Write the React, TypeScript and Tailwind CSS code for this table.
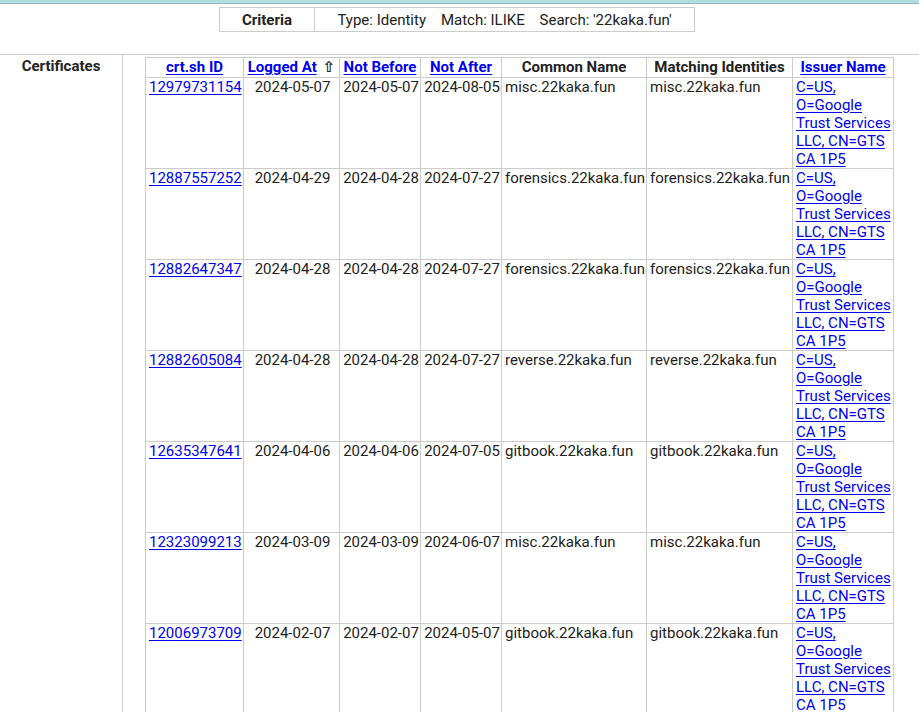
import React from 'react';

type Cert = { id: string; logged: string; notBefore: string; notAfter: string; name: string };

const certs: Cert[] = [
  { id: '12979731154', logged: '2024-05-07', notBefore: '2024-05-07', notAfter: '2024-08-05', name: 'misc.22kaka.fun' },
  { id: '12887557252', logged: '2024-04-29', notBefore: '2024-04-28', notAfter: '2024-07-27', name: 'forensics.22kaka.fun' },
  { id: '12882647347', logged: '2024-04-28', notBefore: '2024-04-28', notAfter: '2024-07-27', name: 'forensics.22kaka.fun' },
  { id: '12882605084', logged: '2024-04-28', notBefore: '2024-04-28', notAfter: '2024-07-27', name: 'reverse.22kaka.fun' },
  { id: '12635347641', logged: '2024-04-06', notBefore: '2024-04-06', notAfter: '2024-07-05', name: 'gitbook.22kaka.fun' },
  { id: '12323099213', logged: '2024-03-09', notBefore: '2024-03-09', notAfter: '2024-06-07', name: 'misc.22kaka.fun' },
  { id: '12006973709', logged: '2024-02-07', notBefore: '2024-02-07', notAfter: '2024-05-07', name: 'gitbook.22kaka.fun' },
];

const issuer = 'C=US, O=Google Trust Services LLC, CN=GTS CA 1P5';

const link = 'text-[#0000ee] underline underline-offset-2';
const th = 'border border-[#cccccc] px-[2px] pb-[1px] text-center font-bold align-middle whitespace-nowrap';
const td = 'border border-[#cccccc] pl-[3px] pr-px align-top';

export default function App() {
  return (
    <div className="min-h-[712px] bg-white text-[15px] leading-[18px] text-[#222]" style={{ fontFamily: 'Roboto, "Liberation Sans", sans-serif' }}>
      <div className="h-[3px] bg-[#b2dde3]" />
      <div className="h-px bg-[#9ab7bb]" />

      <div className="mt-[3px] pl-[219px]">
        <table className="border-collapse">
          <tbody>
            <tr>
              <th className="w-[95px] border border-[#cccccc] pt-[3px] pb-[2px] text-center font-bold">Criteria</th>
              <td className="w-[380px] border border-[#cccccc] pt-[3px] pb-[2px] text-center whitespace-nowrap">
                Type: Identity&nbsp;&nbsp;&nbsp; Match: ILIKE&nbsp;&nbsp;&nbsp; Search: '22kaka.fun'
              </td>
            </tr>
          </tbody>
        </table>
      </div>

      <div className="mt-[22px] flex border-t border-[#cccccc]">
        <div className="w-[123px] shrink-0 border-r border-[#cccccc] pt-[2px] text-center font-bold min-h-[660px]">
          Certificates
        </div>
        <div className="pl-[22px] pt-[2px]">
          <table className="w-[749px] table-fixed border-collapse">
            <thead>
              <tr>
                <th className={`${th} w-[98px]`}><a className={link}>crt.sh ID</a></th>
                <th className={`${th} w-[96px]`}>
                  <a className={link}>Logged At</a>
                  <span className="ml-[6px] text-[15px] leading-none font-bold" style={{ fontFamily: '"DejaVu Sans", sans-serif' }}>⇧</span>
                </th>
                <th className={`${th} w-[81px]`}><a className={link}>Not Before</a></th>
                <th className={`${th} w-[81px]`}><a className={link}>Not After</a></th>
                <th className={`${th} w-[145px]`}>Common Name</th>
                <th className={`${th} w-[146px]`}>Matching Identities</th>
                <th className={`${th} w-[101px]`}><a className={link}>Issuer Name</a></th>
              </tr>
            </thead>
            <tbody>
              {certs.map((c) => (
                <tr key={c.id}>
                  <td className={td}><a className={link}>{c.id}</a></td>
                  <td className={`${td} text-center whitespace-nowrap`}>{c.logged}</td>
                  <td className={`${td} text-center whitespace-nowrap`}>{c.notBefore}</td>
                  <td className={`${td} text-center whitespace-nowrap`}>{c.notAfter}</td>
                  <td className={`${td} whitespace-nowrap`}>{c.name}</td>
                  <td className={`${td} whitespace-nowrap`}>{c.name}</td>
                  <td className={td}><a className={link}>{issuer}</a></td>
                </tr>
              ))}
            </tbody>
          </table>
        </div>
      </div>
    </div>
  );
}
